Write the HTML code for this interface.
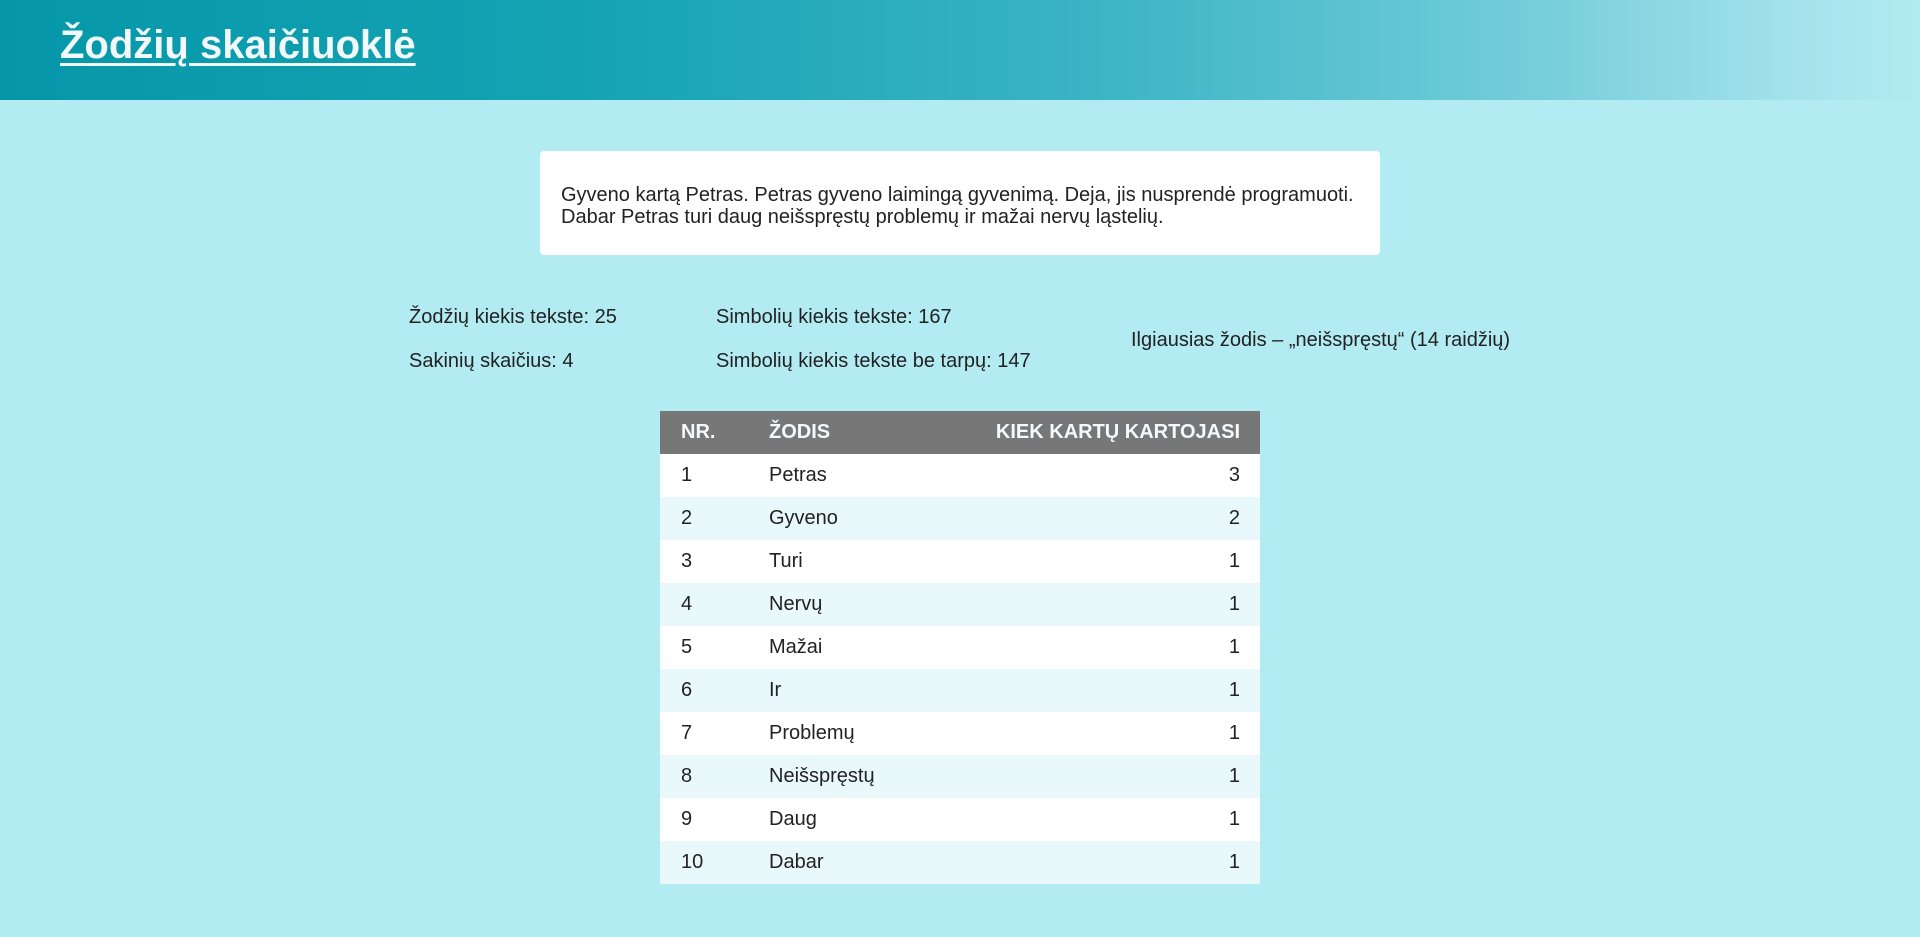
<!DOCTYPE html>
<html><head><meta charset="utf-8"><style>
*{margin:0;padding:0;box-sizing:border-box}
body{width:1920px;height:937px;background:#b2ebf2;font-family:"Liberation Sans",Arial,sans-serif;color:#222;position:relative;overflow:hidden}
header{height:100px;background:linear-gradient(90deg,#0597a9 0%,#14a3b3 30%,#3db5c5 58%,#6fcbd8 78%,#a5e3ec 94%,#b2ebf2 100%)}
h1{position:absolute;left:60px;top:23px;font-size:40px;font-weight:bold;color:#f2f9fc;text-decoration:underline;text-decoration-thickness:3px;text-underline-offset:5px}
.card{position:absolute;left:540px;top:151px;width:840px;height:104px;background:#fff;border-radius:4px;padding:33px 21px;font-size:20px;line-height:22px}
.s{position:absolute;font-size:20px}
table{position:absolute;left:660px;top:411px;width:600px;border-collapse:collapse;font-size:20px}
th{background:#777;color:#f4f9fc;height:43px;text-align:left;font-weight:bold;font-size:20px}
td{height:43px;background:#fff}
tr:nth-child(even) td{background:#e9f8fa}
.a{padding-left:21px;width:109px}
.c{text-align:right;padding-right:20px}
</style></head><body>
<header></header>
<h1>Žodžių skaičiuoklė</h1>
<div class="card">Gyveno kartą Petras. Petras gyveno laimingą gyvenimą. Deja, jis nusprendė programuoti.<br>Dabar Petras turi daug neišspręstų problemų ir mažai nervų ląstelių.</div>
<div class="s" style="left:409px;top:306px">Žodžių kiekis tekste: 25</div>
<div class="s" style="left:409px;top:350px">Sakinių skaičius: 4</div>
<div class="s" style="left:716px;top:306px">Simbolių kiekis tekste: 167</div>
<div class="s" style="left:716px;top:350px">Simbolių kiekis tekste be tarpų: 147</div>
<div class="s" style="left:1131px;top:329px">Ilgiausias žodis – „neišspręstų“ (14 raidžių)</div>
<table>
<thead><tr><th class="a">NR.</th><th>ŽODIS</th><th class="c">KIEK KARTŲ KARTOJASI</th></tr></thead>
<tbody>
<tr><td class="a">1</td><td>Petras</td><td class="c">3</td></tr>
<tr><td class="a">2</td><td>Gyveno</td><td class="c">2</td></tr>
<tr><td class="a">3</td><td>Turi</td><td class="c">1</td></tr>
<tr><td class="a">4</td><td>Nervų</td><td class="c">1</td></tr>
<tr><td class="a">5</td><td>Mažai</td><td class="c">1</td></tr>
<tr><td class="a">6</td><td>Ir</td><td class="c">1</td></tr>
<tr><td class="a">7</td><td>Problemų</td><td class="c">1</td></tr>
<tr><td class="a">8</td><td>Neišspręstų</td><td class="c">1</td></tr>
<tr><td class="a">9</td><td>Daug</td><td class="c">1</td></tr>
<tr><td class="a">10</td><td>Dabar</td><td class="c">1</td></tr>
</tbody></table>
</body></html>
